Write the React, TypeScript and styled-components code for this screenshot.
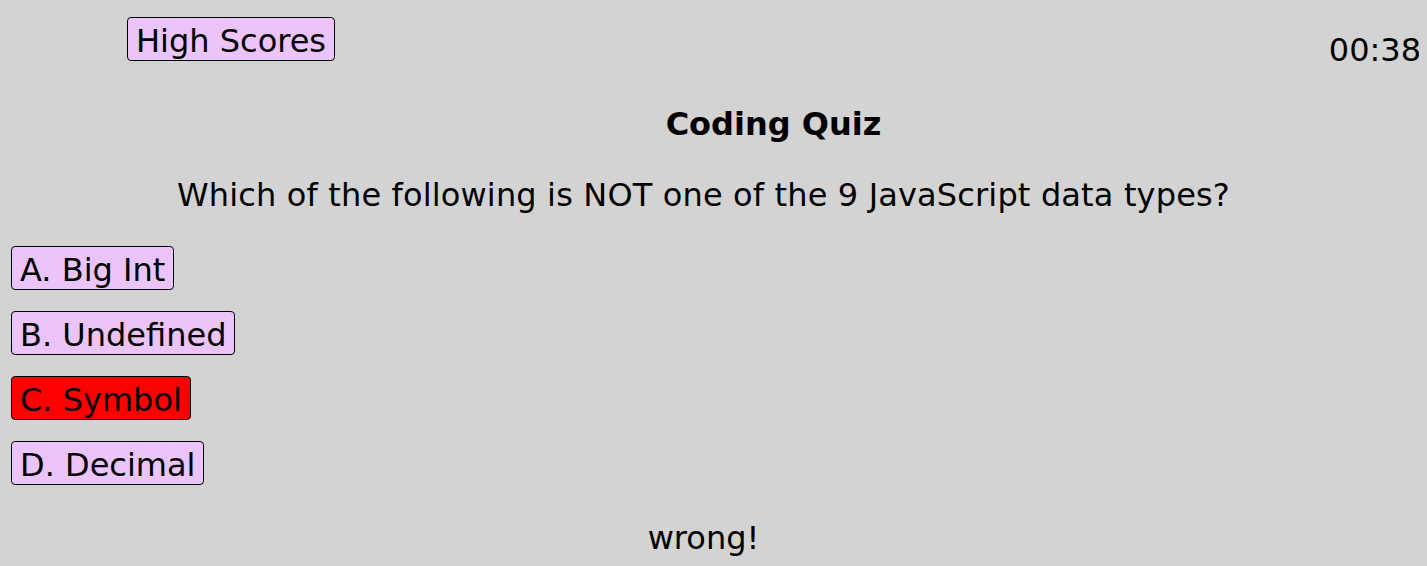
import React, { useState } from 'react'
import styled, { createGlobalStyle } from 'styled-components'

const GlobalStyle = createGlobalStyle`
  html, body {
    margin: 0;
    padding: 0;
    background-color: #d3d3d3;
  }
  body {
    margin: 8px;
    font-family: 'DejaVu Sans', Verdana, sans-serif;
    font-size: 32px;
    color: #000;
  }
`

const answers = [
  { key: 'A', label: 'Big Int' },
  { key: 'B', label: 'Undefined' },
  { key: 'C', label: 'Symbol' },
  { key: 'D', label: 'Decimal' },
]

export default function App() {
  const [picked] = useState('C')

  return (
    <>
      <GlobalStyle />
      <Header>
        <ScoresButton>High Scores</ScoresButton>
        <Timer>00:38</Timer>
      </Header>
      <Title>Coding Quiz</Title>
      <Question>Which of the following is NOT one of the 9 JavaScript data types?</Question>
      <AnswerList>
        {answers.map((a) => (
          <AnswerButton key={a.key} $wrong={a.key === picked}>
            {a.key}. {a.label}
          </AnswerButton>
        ))}
      </AnswerList>
      <Feedback>wrong!</Feedback>
    </>
  )
}

const Header = styled.header`
  display: flex;
  justify-content: space-between;
  align-items: flex-start;
  padding-top: 9px;
`

const Button = styled.button`
  font-family: inherit;
  font-size: 32px;
  line-height: 38px;
  color: #000;
  background-color: #eac4fa;
  border: 1px solid #000;
  border-radius: 4px;
  padding: 4px 8px 0 8px;
  cursor: pointer;
`

const ScoresButton = styled(Button)`
  margin-left: 119px;
`

const Timer = styled.div`
  margin-top: 14px;
  margin-right: -2px;
  line-height: normal;
`

const Title = styled.h1`
  margin: 36px 0 0 0;
  padding-left: 120px;
  font-size: 32px;
  font-weight: bold;
  line-height: normal;
  text-align: center;
`

const Question = styled.p`
  margin: 33px 0 0 0;
  padding-right: 20px;
  letter-spacing: 0.15px;
  line-height: normal;
  text-align: center;
`

const AnswerList = styled.div`
  display: flex;
  flex-direction: column;
  align-items: flex-start;
  gap: 21px;
  margin-top: 32px;
  padding-left: 3px;
`

const AnswerButton = styled(Button)<{ $wrong?: boolean }>`
  background-color: ${(p) => (p.$wrong ? '#ff0000' : '#eac4fa')};
`

const Feedback = styled.p`
  margin: 34px 0 0 0;
  padding-right: 20px;
  line-height: normal;
  text-align: center;
`
